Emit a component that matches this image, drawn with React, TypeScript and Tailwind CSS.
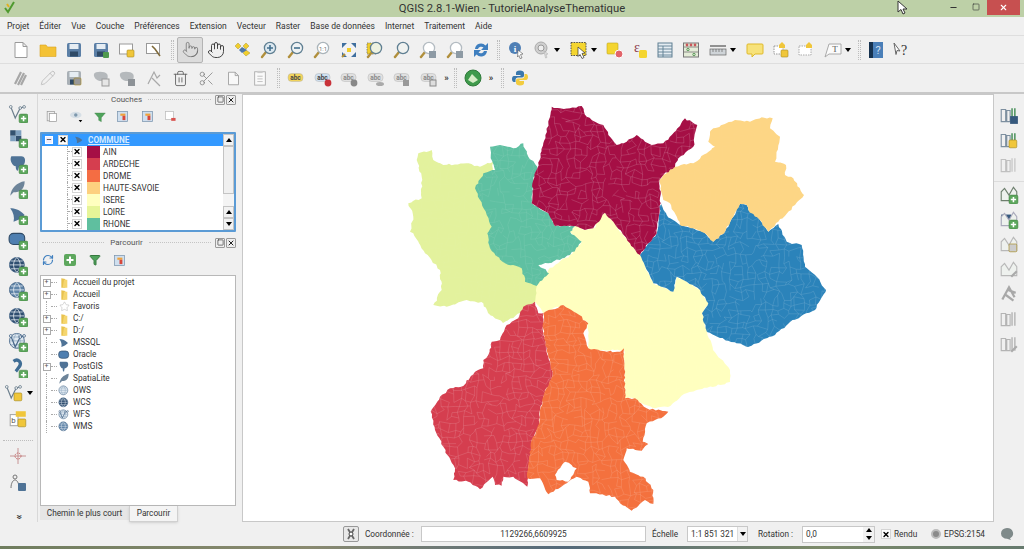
import type { ReactNode } from 'react';
import { Hand, Pointer, Trash2, Scissors, Pencil, RefreshCw, Filter, Star, Minus, Square, X } from 'lucide-react';

const font = "font-['Roboto','Noto_Sans',sans-serif]";

// ---- small icon drawings, all on an 18x18 box ----
const Mag = ({ fill = '#e6eef2', stroke = '#5f7f92', children }: { fill?: string; stroke?: string; children?: ReactNode }) => (
  <>
    <line x1="6" y1="11" x2="2" y2="16" stroke="#b08f3c" strokeWidth="2.4" strokeLinecap="round" />
    <circle cx="10" cy="7" r="5.6" fill={fill} stroke={stroke} strokeWidth="1.3" />
    {children}
  </>
);
const Plus = ({ x = 14, y = 14, c = '#5da75d' }: { x?: number; y?: number; c?: string }) => (
  <>
    <rect x={x - 4} y={y - 4} width="8" height="8" rx="1.5" fill={c} stroke="#3f7f3f" strokeWidth=".5" />
    <path d={`M${x - 2.4} ${y}h4.8M${x} ${y - 2.4}v4.8`} stroke="#fff" strokeWidth="1.4" />
  </>
);
const Floppy = ({ c = '#5b7fa6' }: { c?: string }) => (
  <>
    <rect x="2" y="2" width="14" height="14" rx="1.5" fill={c} />
    <rect x="4.5" y="3" width="9" height="5" fill="#e6edf3" />
    <rect x="5" y="10.5" width="8" height="5" fill="#2f4a66" />
  </>
);
const Page = ({ c = '#fff' }: { c?: string }) => <path d="M3 1.5h8l4 4v11H3z M11 1.5v4h4" fill={c} stroke="#9a9a9a" strokeWidth="1" />;
const Sticker = ({ c = '#f0c63a' }: { c?: string }) => <rect x="9" y="9" width="7" height="7" rx="1" fill={c} stroke="#a78c23" strokeWidth=".6" />;
const Folder = () => <path d="M1 4h6l1.500 2H17v9.500H1z" fill="#f4c235" stroke="#d8a320" strokeWidth=".6" />;
const Globe = ({ c = '#5f84a8', light = false }: { c?: string; light?: boolean }) => (
  <>
    <circle cx="8" cy="8" r="6.7" fill={light ? '#dfe8f0' : c} stroke="#48688a" strokeWidth=".8" />
    <path d="M1.500 8h13M8 1.300c-4 4-4 9.400 0 13.400M8 1.300c4 4 4 9.400 0 13.400M2.800 4.500h10.400M2.800 11.500h10.400" fill="none" stroke={light ? '#8fa8c0' : '#e8eef4'} strokeWidth=".7" />
  </>
);
const Vertices = ({ c = '#6a7d8c' }: { c?: string }) => (
  <>
    <path d="M2.500 3.500l4 10L11 4.500l3.500-1" fill="none" stroke={c} strokeWidth="1.100" />
    <circle cx="2.500" cy="3.500" r="1.200" fill="#fff" stroke={c} strokeWidth=".8" />
    <circle cx="11" cy="4.500" r="1.200" fill="#fff" stroke={c} strokeWidth=".8" />
    <circle cx="14.500" cy="3.500" r="1.200" fill="#fff" stroke={c} strokeWidth=".8" />
  </>
);
const Shape = () => <path d="M2 3c4 0 8 1 13 6-3 3-6 5-10 6 1-4 0-8-3-12z" fill="#4f7396" />;
const Label = ({ text = '#444', bg = '#f2d45c', extra }: { text?: string; bg?: string; extra?: ReactNode }) => (
  <>
    <rect x="1" y="4.500" width="15" height="8" rx="3.500" fill={bg} stroke="#aaa" strokeWidth=".4" />
    <text x="8.500" y="11" fontSize="6.500" textAnchor="middle" fill={text} fontFamily="Roboto" fontWeight="700">abc</text>
    {extra}
  </>
);
const Bars = ({ tone = '#7d8f9f', a = '#5a9a6a' }: { tone?: string; a?: string }) => (
  <>
    <path d="M2 15V4h4v11zM7 15V5h3v10z" fill="none" stroke={tone} strokeWidth="1" />
    <path d="M11 15V3h1.500v12zM13.500 15V3H15v12z" fill={a} />
  </>
);
const Lines = ({ c = '#7a8a7a' }: { c?: string }) => <path d="M2 14V7l3-3 4 6 4-7 3 4v8H2z" fill="#eef1ee" stroke={c} strokeWidth="1" />;

const glyphs: Record<string, ReactNode> = {
  newdoc: <Page />,
  open: <Folder />,
  treefolder: (<><path d="M5 2l6 1v13H5z" fill="#e8c24e" /><path d="M9 4h5v12H7z" fill="#f5d66f" /></>),
  save: <Floppy />,
  saveas: (<><Floppy /><rect x="11" y="11" width="6" height="6" rx="1" fill="#4f9a4f" /></>),
  composer: (<><rect x="1.500" y="3" width="13" height="10" fill="#fff" stroke="#999" /><Sticker /></>),
  manager: (<><rect x="1.500" y="2.500" width="13" height="10" fill="#fff" stroke="#999" /><path d="M7 5l3 3 5 7" stroke="#7f6a3a" strokeWidth="1.600" fill="none" /></>),
  pan: (<><path d="M4 2l3 3-3 3-3-3zM12 2l3 3-3 3-3-3zM12 9l4 3-4 3-3-3z" fill="#f2cf2c" stroke="#9a8420" strokeWidth=".4" /><path d="M8 6l5 3-5 3-3-3z" fill="#4f78a8" /></>),
  zoomin: (<Mag fill="#dce8f0"><path d="M7 7h6M10 4v6" stroke="#43708f" strokeWidth="1.600" /></Mag>),
  zoomout: (<Mag fill="#eef2f4"><path d="M7 7h6" stroke="#43708f" strokeWidth="1.600" /></Mag>),
  zoom11: (<Mag fill="#fff" stroke="#aab4ba"><text x="10" y="9.500" fontSize="6" textAnchor="middle" fill="#777" fontFamily="Roboto">1:1</text></Mag>),
  full: (<><rect x="3" y="3" width="12" height="12" fill="#f3f3f3" /><path d="M2 2h5L2 7zM16 2v5l-5-5zM2 16v-5l5 5zM16 16h-5l5-5z" fill="#3f6f9f" /><path d="M5 13l-3 3" stroke="#b08f3c" strokeWidth="2" /><path d="M7 7h4v4H7z" fill="#f2cf2c" /></>),
  zsel: (<><rect x="1" y="2" width="9" height="11" fill="#f2cf2c" stroke="#666" strokeDasharray="1.500 1" strokeWidth=".7" /><Mag fill="#eef2e0" /></>),
  zlayer: (<Mag fill="#f0f2f0" />),
  zlast: (<><Mag fill="#fff" stroke="#b4bcc2" /><rect x="10" y="10" width="7" height="7" fill="#8d9aa4" /></>),
  znext: (<><Mag fill="#fff" stroke="#b4bcc2" /><rect x="10" y="10" width="7" height="7" fill="#8d9aa4" /></>),
  refresh: <path d="M3 8a6 6 0 0 1 10.500-3.500L16 2v7h-7l2.500-2.500A3.500 3.500 0 0 0 6 8zM15 10a6 6 0 0 1-10.500 3.500L2 16V9h7l-2.500 2.500A3.500 3.500 0 0 0 12 10z" fill="#3f7fbf" />,
  info: (<><circle cx="8" cy="7" r="6" fill="#4f7fb5" /><text x="8" y="10.500" fontSize="9" textAnchor="middle" fill="#fff" fontWeight="700" fontFamily="Liberation Serif">i</text><path d="M11 9l5 4-2.500.5L15 17l-2 .5-1-3-1.500 1.500z" fill="#fff" stroke="#555" strokeWidth=".6" /></>),
  idgray: (<><circle cx="8" cy="7" r="6" fill="#cfcfcf" stroke="#aaa" /><circle cx="8" cy="7" r="3" fill="#eee" stroke="#999" /><path d="M11 10l4 3-2 .5 1 3-1.500.5z" fill="#ddd" stroke="#aaa" strokeWidth=".5" /></>),
  select: (<><rect x="1" y="1.500" width="15" height="13" fill="#f4d52f" stroke="#444" strokeDasharray="1.600 1" strokeWidth=".9" /><path d="M8 6l7 6-3 .5 2 4-2 1-2-4-2 2z" fill="#fff" stroke="#333" strokeWidth=".7" /></>),
  deselect: (<><rect x="1" y="2" width="11" height="11" rx="1" fill="#f4d52f" stroke="#c0a81f" strokeWidth=".6" /><circle cx="13" cy="13" r="4" fill="#e2646a" stroke="#fff" /></>),
  expr: (<><text x="6" y="11" fontSize="14" textAnchor="middle" fill="#8c3a4a" fontFamily="Liberation Serif">ε</text><rect x="8" y="9" width="8" height="8" rx="1.500" fill="#f4d52f" /></>),
  table: (<><rect x="2" y="2" width="14" height="14" fill="#e4ecf2" stroke="#5f7f92" /><path d="M2 5h14M2 8h14M2 11h14M2 14h14M7 5v11" stroke="#5f7f92" strokeWidth=".9" /></>),
  stats: (<><rect x="1.500" y="2" width="15" height="14" fill="#e4ecd8" stroke="#777" /><path d="M1.500 6h15M1.500 11h15" stroke="#777" strokeWidth=".8" /><circle cx="5" cy="4" r="1.400" fill="#c9565a" /><circle cx="9" cy="4" r="1.400" fill="#c9565a" /><circle cx="13" cy="4" r="1.400" fill="#c9565a" /><circle cx="6" cy="8.500" r="1.200" fill="none" stroke="#5a9a5a" /><circle cx="12" cy="13.500" r="1.200" fill="none" stroke="#5a9a5a" /></>),
  measure: (<><path d="M1 5h16" stroke="#333" strokeWidth="1" /><rect x="1" y="8" width="16" height="6" fill="#cfd4d8" stroke="#666" strokeWidth=".7" /><path d="M4 8v3M7 8v3M10 8v3M13 8v3" stroke="#666" strokeWidth=".7" /></>),
  tip: <path d="M2 3h14a1 1 0 0 1 1 1v8a1 1 0 0 1-1 1H9l-3 3v-3H2a1 1 0 0 1-1-1V4a1 1 0 0 1 1-1z" fill="#f7e27a" stroke="#dfb92a" />,
  movetip: (<><rect x="2" y="5" width="9" height="8" fill="#fff" stroke="#999" strokeDasharray="1.500 1" /><path d="M7 4l3-3 3 3v3H7z" fill="#f0c63a" /><Sticker /></>),
  movetip2: (<><rect x="2" y="5" width="12" height="9" fill="#fff" stroke="#aaa" strokeDasharray="1.500 1" /><path d="M9 4l3-3 3 3v3H9z" fill="#f0c63a" /></>),
  text: (<><path d="M5 3h12v10H5L1 16z" fill="#fbfbfb" stroke="#aaa" /><text x="11" y="11" fontSize="9" textAnchor="middle" fill="#555" fontFamily="Liberation Serif">T</text></>),
  help: (<><rect x="2" y="1" width="14" height="16" fill="#4a7fb8" /><rect x="2" y="1" width="4" height="16" fill="#16324f" /><text x="11" y="13" fontSize="11" textAnchor="middle" fill="#cfe0f2" fontFamily="Roboto">?</text></>),
  whatsthis: (<><path d="M2 2l6 8-3-.5-1 4z" fill="#fff" stroke="#666" /><text x="12" y="14" fontSize="14" textAnchor="middle" fill="#333" fontFamily="Liberation Serif">?</text></>),
  edits: <path d="M3 15L9 3M6 16L12 4M9 16l5-10" stroke="#a7a7a7" strokeWidth="2.200" />,
  savedit: (<><Floppy c="#a9b0b6" /><Sticker c="#999" /></>),
  cloud: (<><path d="M2 5c1-3 11-3 13 0 1.500 2 .5 6-1 7H8c-3 0-7-4-6-7z" fill="#b5b9bc" /><rect x="10" y="10" width="7" height="7" fill="#e6e6e6" stroke="#999" /></>),
  cloud2: (<><path d="M2 5c1-3 11-3 13 0 1.500 2 .5 6-1 7H8c-3 0-7-4-6-7z" fill="#b5b9bc" /><rect x="10" y="10" width="7" height="7" fill="#8d9297" /></>),
  vertexed: <path d="M3 15L9 3l3 6 3-3M7 9l8 8" stroke="#a9a9a9" strokeWidth="1.200" fill="none" />,
  copy: <Page c="#f8f8f8" />,
  paste: (<><rect x="3" y="2" width="12" height="15" fill="#fafafa" stroke="#aaa" /><path d="M6 7h6M6 10h6M6 13h6" stroke="#bbb" /><rect x="6" y="1" width="6" height="2.500" fill="#ccc" /></>),
  abc1: <Label />,
  abc2: <Label bg="#cfe0f0" extra={<circle cx="14" cy="14" r="3.400" fill="#c8323a" />} />,
  abc3: <Label bg="#e0e0e0" text="#888" extra={<circle cx="14" cy="14" r="3.400" fill="#888" />} />,
  abc4: <Label bg="#e0e0e0" text="#888" extra={<ellipse cx="13" cy="15" rx="4" ry="2" fill="#aaa" />} />,
  abc5: <Label bg="#e0e0e0" text="#888" extra={<rect x="10" y="11" width="6" height="6" fill="#999" />} />,
  abc6: <Label bg="#e0e0e0" text="#888" extra={<rect x="10" y="11" width="6" height="6" fill="#ddd" stroke="#888" />} />,
  sphere: (<><circle cx="9" cy="9" r="8" fill="#3f9a4c" stroke="#2f7a3a" /><path d="M4 11l4-6 6 6-5 3z" fill="#d6ecc6" /></>),
  python: (<><path d="M9 1.500c-3 0-4 1-4 2.500V6h4.500v1H3C1.500 7 1 8.500 1 10s.5 3 2 3h1.500v-2c0-1.500 1-2.500 2.500-2.500h4c1.200 0 2-.8 2-2V4c0-1.500-1.500-2.500-4-2.500z" fill="#3b78ac" /><path d="M9 16.500c3 0 4-1 4-2.500v-2H8.500v-1H15c1.500 0 2-1.500 2-3s-.5-3-2-3h-1.500v2c0 1.500-1 2.500-2.500 2.500H7c-1.200 0-2 .8-2 2V14c0 1.500 1.500 2.500 4 2.500z" fill="#f2cc3f" /></>),
  pagesmall: (<><rect x="3" y="2" width="10" height="13" fill="#f0f0f0" stroke="#999" /><rect x="6" y="5" width="10" height="11" fill="#fff" stroke="#999" /></>),
  eye: (<><ellipse cx="8" cy="7" rx="8" ry="4.500" fill="#d6dfe6" /><circle cx="8" cy="7" r="2.400" fill="#7d98ad" /><path d="M12 14h5l-2.500 3z" fill="#000" /></>),
  funnel: <path d="M1 3h16l-6 7v6l-4-2v-4z" fill="#4fa35c" stroke="#36783f" strokeWidth=".5" />,
  layers: (<><rect x="2" y="2" width="14" height="14" fill="#cfdfef" stroke="#7a94ad" /><path d="M6 5h7v3H6z" fill="#f0a33a" /><path d="M9 8h4v6H9z" fill="#d8473a" /></>),
  remove: (<><rect x="2" y="2" width="11" height="11" fill="#fff" stroke="#bbb" /><rect x="10" y="11" width="6" height="4" fill="#d9534f" /></>),
  addvec: (<><Vertices /><Plus /></>),
  addrast: (<><path d="M2 2h5v5H2zM7 7h5v5H7z" fill="#33516f" /><path d="M7 2h5v5H7zM2 7h5v5H2z" fill="#7fa0bf" /><Plus /></>),
  addpg: (<><path d="M3 2h9c3 0 4 3 3 6-1 3-4 3-5 3l-1 4c-2 0-2-3-2-4-3 0-6-6-4-9z" fill="#4f7396" /><Plus /></>),
  addspatial: (<><path d="M2 15C3 8 8 3 15 2c0 7-4 10-10 10z" fill="#6d8499" /><Plus /></>),
  addmssql: (<><Shape /><Plus /></>),
  addoracle: (<><rect x="1" y="3" width="14" height="10" rx="4" fill="#4f7fb0" stroke="#2f4a66" /><Plus /></>),
  addwms: (<><Globe /><Plus /></>),
  addwcs: (<><Globe c="#2f4e70" /><Plus /></>),
  addwfs: (<><Globe light /><Vertices c="#48688a" /><Plus /></>),
  addcomma: (<><path d="M5 3c4-3 8 1 5 5-1 1.500-2 3-3 4" fill="none" stroke="#3f6d95" strokeWidth="3" /><Plus x={14} y={15} /></>),
  newvec: (<><Vertices /><Sticker /></>),
  addfield: (<><rect x="2" y="5" width="7" height="10" fill="#fff" stroke="#aaa" /><path d="M7 2h9v5H7z" fill="#f0c63a" /><text x="5" y="13" fontSize="7" textAnchor="middle" fontFamily="Roboto" fill="#555">b</text><Sticker /></>),
  crosshair: (<><path d="M9 1v16M1 9h16" stroke="#c28a8a" strokeWidth=".9" /><circle cx="9" cy="9" r="3" fill="none" stroke="#c26a6a" strokeDasharray="1.500 1" /></>),
  personplugin: (<><circle cx="6" cy="3" r="2" fill="none" stroke="#777" /><path d="M2 14c0-5 2-8 4-8s4 3 4 8" fill="none" stroke="#777" /><rect x="9" y="9" width="8" height="8" rx="1" fill="#4f7396" /></>),
  r1: (<><Bars /><rect x="10" y="10" width="7" height="7" fill="#36597d" /></>),
  r2: (<><Bars /><Sticker /></>),
  r3: <Bars tone="#c0c0c0" a="#d0d0d0" />,
  r4: (<><Lines c="#6e7f6e" /><Plus x={13} y={14} /></>),
  r5: (<><rect x="2" y="5" width="9" height="9" fill="#36597d" /><Lines c="#aab" /><Plus x={13} y={14} /></>),
  r6: (<><Lines c="#b8b8b8" /><Sticker c="#ccc" /></>),
  r7: (<><Lines c="#b8b8b8" /><path d="M11 16l5-5" stroke="#aaa" strokeWidth="2" /></>),
  r8: <path d="M3 14L9 3l5 9M7 5l8 3M5 9l8 6" stroke="#a8a8a8" strokeWidth="2" fill="none" />,
  r9: <Bars tone="#b4b4b4" a="#bdbdbd" />,
  r10: (<><Bars tone="#b4b4b4" a="#bdbdbd" /><path d="M11 16l5-5" stroke="#aaa" strokeWidth="2" /></>),
  mssql: <Shape />,
  oracle: <rect x="1" y="3" width="15" height="11" rx="4.500" fill="#4f7fb0" stroke="#2f4a66" />,
  pg: <path d="M3 1h9c3 0 4 3 3 6-1 3-4 4-5 4l-1 5c-2 0-2-3-2-5-3 0-6-7-4-10z" fill="#4f7396" />,
  spatialite: <path d="M2 16C3 8 8 3 16 1c0 8-4 11-10 11z" fill="#6d8499" />,
  ows: <Globe light />,
  wcs: <Globe c="#2f4e70" />,
  wfs: (<><Globe light /><Vertices c="#48688a" /></>),
  wms: <Globe />,
};

function Ico({ name, size = 18 }: { name: string; size?: number }) {
  return (
    <svg width={size} height={size} viewBox="0 0 18 18" className="shrink-0">
      {glyphs[name]}
    </svg>
  );
}

// ---- toolbar parts ----
function Drop() {
  return <span className="ml-[3px] h-0 w-0 border-x-[3.5px] border-t-[4px] border-x-transparent border-t-black" />;
}

function Tool({ children, w = 'w-[26.5px]', dropdown = false }: { children: ReactNode; w?: string; dropdown?: boolean }) {
  return (
    <div className={`flex h-full shrink-0 items-center justify-center ${w}`}>
      {children}
      {dropdown && <Drop />}
    </div>
  );
}

function Grip({ w = 'w-[10px]' }: { w?: string }) {
  return (
    <div className={`flex h-full shrink-0 items-center justify-center ${w}`}>
      <div className="h-[20px] w-[3px] border-x border-dotted border-[#bdbdbd]" />
    </div>
  );
}

function Row1() {
  const first = ['newdoc', 'open', 'save', 'saveas', 'composer', 'manager'];
  const nav = ['pan', 'zoomin', 'zoomout', 'zoom11', 'full', 'zsel', 'zlayer', 'zlast', 'znext', 'refresh'];
  return (
    <div className="flex h-[27px] items-center pl-[8px]">
      {first.map((n) => (
        <Tool key={n}><Ico name={n} /></Tool>
      ))}
      <Grip />
      <div className="flex h-[26px] w-[26px] shrink-0 items-center justify-center rounded-[2px] border border-[#b4b4b4] bg-[#dcdcdc]">
        <Pointer size={17} strokeWidth={1} color="#666" />
      </div>
      <Tool><Hand size={18} strokeWidth={1.2} color="#333" /></Tool>
      {nav.map((n) => (
        <Tool key={n}><Ico name={n} /></Tool>
      ))}
      <Grip w="w-[8px]" />
      <Tool w="w-[26px]"><Ico name="info" /></Tool>
      <Tool w="w-[36px]" dropdown><Ico name="idgray" /></Tool>
      <Tool w="w-[38px]" dropdown><Ico name="select" /></Tool>
      <Tool w="w-[24px]"><Ico name="deselect" /></Tool>
      <Tool w="w-[26px]"><Ico name="expr" /></Tool>
      <Tool w="w-[25px]"><Ico name="table" /></Tool>
      <Tool w="w-[26px]"><Ico name="stats" /></Tool>
      <Tool w="w-[38px]" dropdown><Ico name="measure" /></Tool>
      <Tool w="w-[26px]"><Ico name="tip" /></Tool>
      <Tool w="w-[26px]"><Ico name="movetip" /></Tool>
      <Tool w="w-[25px]"><Ico name="movetip2" /></Tool>
      <Tool w="w-[38px]" dropdown><Ico name="text" /></Tool>
      <Grip w="w-[6px]" />
      <Tool w="w-[26px]"><Ico name="help" /></Tool>
      <Tool w="w-[25px]"><Ico name="whatsthis" /></Tool>
    </div>
  );
}

function Row2() {
  const abc = ['abc1', 'abc2', 'abc3', 'abc4', 'abc5', 'abc6'];
  return (
    <div className="flex h-[28px] items-center pl-[8px]">
      <Tool><Ico name="edits" /></Tool>
      <Tool><Pencil size={16} strokeWidth={1} color="#aaa" /></Tool>
      <Tool><Ico name="savedit" /></Tool>
      <Tool><Ico name="cloud" /></Tool>
      <Tool><Ico name="cloud2" /></Tool>
      <Tool><Ico name="vertexed" /></Tool>
      <Tool><Trash2 size={17} strokeWidth={1.3} color="#666" /></Tool>
      <Tool><Scissors size={17} strokeWidth={1} color="#777" /></Tool>
      <Tool><Ico name="copy" size={15} /></Tool>
      <Tool><Ico name="paste" size={16} /></Tool>
      <Grip />
      {abc.map((n) => (
        <Tool key={n}><Ico name={n} /></Tool>
      ))}
      <Tool w="w-[9px]"><span className="text-[9px] font-bold leading-none text-[#333]">»</span></Tool>
      <Grip w="w-[9px]" />
      <Tool w="w-[26px]"><Ico name="sphere" /></Tool>
      <Tool w="w-[10px]"><span className="text-[9px] font-bold leading-none text-[#333]">»</span></Tool>
      <Grip w="w-[12px]" />
      <Tool w="w-[24px]"><Ico name="python" /></Tool>
    </div>
  );
}

// ---- dock panels ----
function DockTitle({ title }: { title: string }) {
  return (
    <div className="flex h-[12px] items-center pl-[4px] pr-[6px]">
      <div className="h-0 flex-1 border-t border-dotted border-[#c4c4c4]" />
      <span className="px-[6px] text-[8px] font-normal leading-none text-[#555]">{title}</span>
      <div className="h-0 flex-1 border-t border-dotted border-[#c4c4c4]" />
      <div className="ml-[4px] flex gap-[1px]">
        <span className="flex h-[10px] w-[10px] items-center justify-center rounded-[1px] border border-[#9a9a9a] bg-[#eee]">
          <Square size={7} strokeWidth={2} color="#222" />
        </span>
        <span className="flex h-[10px] w-[10px] items-center justify-center rounded-[1px] border border-[#9a9a9a] bg-[#eee]">
          <X size={8} strokeWidth={3} color="#222" />
        </span>
      </div>
    </div>
  );
}

function XBox() {
  return (
    <span className="flex h-[10px] w-[10px] shrink-0 items-center justify-center border border-[#d4d4d4] bg-white">
      <X size={9} strokeWidth={4} color="#000" />
    </span>
  );
}

function ScrollBtn({ up }: { up: boolean }) {
  return (
    <div className="flex h-[12px] w-[11px] items-center justify-center border border-[#c4c4c4] bg-[#f2f2f2]">
      <span className={`h-0 w-0 border-x-[3px] border-x-transparent ${up ? 'border-b-[4px] border-b-black' : 'border-t-[4px] border-t-black'}`} />
    </div>
  );
}

const legend = [
  { label: 'AIN', color: '#a50f45' },
  { label: 'ARDECHE', color: '#d53e4f' },
  { label: 'DROME', color: '#f46d43' },
  { label: 'HAUTE-SAVOIE', color: '#fdd07f' },
  { label: 'ISERE', color: '#ffffbf' },
  { label: 'LOIRE', color: '#e6f598' },
  { label: 'RHONE', color: '#5fbf9f' },
  { label: '', color: '#2b83ba' },
];

function LayersTree() {
  return (
    <div className="ml-[2px] mr-[6px] flex h-[100px] overflow-hidden rounded-[1px] border-2 border-[#5b9bd5] bg-white text-[8.25px] leading-none text-[#333]">
      <div className="min-w-0 flex-1">
        <div className="flex h-[12px] items-center bg-[#3399ff] pl-[3px]">
          <span className="flex h-[8px] w-[8px] items-center justify-center border border-white bg-[#eef]"><Minus size={7} strokeWidth={3} color="#333" /></span>
          <span className="ml-[5px]"><XBox /></span>
          <span className="ml-[6px]"><Ico name="mssql" size={10} /></span>
          <span className="ml-[4px] font-bold text-[#d6ebff] underline">COMMUNE</span>
        </div>
        {legend.map((l) => (
          <div key={l.color} className="relative flex h-[12px] items-center pl-[25px]">
            <span className="h-[12px] w-0 border-l border-dotted border-[#aaa]" />
            <span className="w-[4px] border-t border-dotted border-[#aaa]" />
            <XBox />
            <span className="ml-[5px] h-[12px] w-[13px] shrink-0" style={{ backgroundColor: l.color }} />
            <span className="ml-[3px]">{l.label}</span>
          </div>
        ))}
      </div>
      <div className="flex w-[11px] flex-col bg-[#f4f4f4]">
        <ScrollBtn up />
        <div className="h-[48px] border border-[#c4c4c4] bg-[#f0f0f0]" />
        <div className="flex-1" />
        <ScrollBtn up />
        <ScrollBtn up={false} />
      </div>
    </div>
  );
}

const browser = [
  { label: 'Accueil du projet', icon: 'treefolder', plus: true },
  { label: 'Accueil', icon: 'treefolder', plus: true },
  { label: 'Favoris', icon: 'star', plus: false },
  { label: 'C:/', icon: 'treefolder', plus: true },
  { label: 'D:/', icon: 'treefolder', plus: true },
  { label: 'MSSQL', icon: 'mssql', plus: false },
  { label: 'Oracle', icon: 'oracle', plus: false },
  { label: 'PostGIS', icon: 'pg', plus: true },
  { label: 'SpatiaLite', icon: 'spatialite', plus: false },
  { label: 'OWS', icon: 'ows', plus: false },
  { label: 'WCS', icon: 'wcs', plus: false },
  { label: 'WFS', icon: 'wfs', plus: false },
  { label: 'WMS', icon: 'wms', plus: false },
];

function BrowserTree() {
  return (
    <div className="ml-[2px] mr-[6px] h-[232px] border border-[#b8b8b8] bg-white pt-[1px] text-[8.25px] leading-none text-[#333]">
      {browser.map((b) => (
        <div key={b.label} className="flex h-[12px] items-center pl-[1px]">
          <span className="flex w-[9px] shrink-0 justify-center">
            {b.plus ? (
              <span className="flex h-[8px] w-[8px] items-center justify-center border border-[#aaa] text-[7px] leading-none text-[#555]">+</span>
            ) : (
              <span className="h-[12px] w-0 border-l border-dotted border-[#aaa]" />
            )}
          </span>
          <span className="w-[6px] shrink-0 border-t border-dotted border-[#aaa]" />
          <span className="flex w-[14px] shrink-0 justify-center">
            {b.icon === 'star' ? <Star size={11} strokeWidth={1} color="#aaa" /> : <Ico name={b.icon} size={12} />}
          </span>
          <span className="ml-[2px]">{b.label}</span>
        </div>
      ))}
    </div>
  );
}

function Panels() {
  return (
    <div className="flex w-[204px] shrink-0 flex-col">
      <DockTitle title="Couches" />
      <div className="flex h-[26px] items-center pb-[4px] pl-[3px]">
        <Tool w="w-[21px]"><Ico name="pagesmall" size={13} /></Tool>
        <Tool w="w-[28px]"><Ico name="eye" size={13} /></Tool>
        <Tool w="w-[20px]"><Ico name="funnel" size={12} /></Tool>
        <Tool w="w-[25px]"><Ico name="layers" size={13} /></Tool>
        <Tool w="w-[24px]"><Ico name="layers" size={13} /></Tool>
        <Tool w="w-[22px]"><Ico name="remove" size={13} /></Tool>
      </div>
      <LayersTree />
      <div className="h-[5px]" />
      <DockTitle title="Parcourir" />
      <div className="flex h-[26px] items-center pb-[3px] pl-[1px]">
        <Tool w="w-[18px]"><RefreshCw size={12} strokeWidth={2.4} color="#3f7fbf" /></Tool>
        <Tool w="w-[25px]"><svg width="12" height="12" viewBox="0 0 12 12"><rect width="12" height="12" rx="2" fill="#5da75d" /><path d="M2.500 6h7M6 2.500v7" stroke="#fff" strokeWidth="2" /></svg></Tool>
        <Tool w="w-[25px]"><Filter size={12} fill="#4fa35c" color="#36783f" /></Tool>
        <Tool w="w-[24px]"><Ico name="layers" size={13} /></Tool>
      </div>
      <BrowserTree />
      <div className="ml-[2px] flex h-[16px] items-start text-[8.25px] leading-none text-[#333]">
        <div className="flex h-[14px] w-[89px] items-center justify-center bg-[#e6e6e6]">Chemin le plus court</div>
        <div className="flex h-[16px] w-[49px] items-center justify-center border border-t-0 border-[#d0d0d0] bg-[#f4f4f4] shadow-sm">Parcourir</div>
      </div>
    </div>
  );
}

function LeftBar() {
  const names = ['addvec', 'addrast', 'addpg', 'addspatial', 'addmssql', 'addoracle', 'addwcs', 'addwms', 'addwcs', 'addwfs', 'addcomma'];
  return (
    <div className="flex w-[38px] shrink-0 flex-col items-center border-r border-[#d8d8d8] pr-[1px] pt-[6px]">
      {names.map((n, i) => (
        <div key={n + i} className="flex h-[25.5px] items-center justify-center"><Ico name={n} size={20} /></div>
      ))}
      <div className="flex h-[25.5px] items-center"><Ico name="newvec" size={20} /><Drop /></div>
      <div className="flex h-[25.5px] items-center justify-center"><Ico name="addfield" size={20} /></div>
      <div className="mt-[8px] w-[30px] border-t border-dotted border-[#bdbdbd]" />
      <div className="mt-[2px] flex h-[26px] items-center"><Ico name="crosshair" size={18} /></div>
      <div className="flex h-[28px] items-center"><Ico name="personplugin" size={18} /></div>
      <div className="mt-[15px] rotate-90 text-[10px] font-bold leading-none text-[#333]">»</div>
    </div>
  );
}

function RightBar() {
  const names = ['r1', 'r2', 'r3', 'r4', 'r5', 'r6', 'r7', 'r8', 'r9', 'r10'];
  return (
    <div className="flex w-[30px] shrink-0 flex-col items-center pt-[8px]">
      {names.map((n, i) => (
        <div key={n} className={`flex h-[25px] items-center justify-center ${i === 3 ? 'mt-[4px] w-full border-t border-[#dcdcdc]' : ''}`}>
          <Ico name={n} size={20} />
        </div>
      ))}
    </div>
  );
}

// ---- the map ----
type Pt = [number, number];

function rng(seed: number) {
  let s = seed;
  return () => {
    s = (s * 16807) % 2147483647;
    return s / 2147483647;
  };
}

// rough the region edges so they read as commune boundaries
function rough(pts: Pt[], ox: number, oy: number, seed: number) {
  const r = rng(seed);
  const out: string[] = [];
  pts.forEach((p, i) => {
    const q = pts[(i + 1) % pts.length];
    const ax = ox + p[0] / 3;
    const ay = oy + p[1] / 3;
    const bx = ox + q[0] / 3;
    const by = oy + q[1] / 3;
    const n = Math.max(1, Math.round(Math.hypot(bx - ax, by - ay) / 3));
    for (let k = 0; k < n; k++) {
      const t = k / n;
      const j = k === 0 ? 0 : 0.9;
      out.push(`${(ax + (bx - ax) * t + (r() - 0.5) * 2 * j).toFixed(1)},${(ay + (by - ay) * t + (r() - 0.5) * 2 * j).toFixed(1)}`);
    }
  });
  return out.join(' ');
}

const A: [number, number] = [400, 100];
const B: [number, number] = [420, 300];

const regions: { id: string; color: string; line: number; at: [number, number]; pts: Pt[] }[] = [
  { id: 'loire', color: '#e3f29d', line: 0.06, at: A, pts: [[55,160],[95,150],[100,180],[130,195],[200,190],[240,200],[280,185],[270,260],[420,560],[410,600],[360,639],[309,669],[264,639],[250,610],[200,600],[140,620],[100,615],[125,570],[120,510],[75,460],[40,400],[30,395],[40,350],[25,310],[65,295],[65,230],[50,180]] },
  { id: 'isere', color: '#ffffbf', line: 0.05, at: A, pts: [[615,338],[640,365],[690,430],[720,465],[760,550],[820,575],[830,530],[860,545],[900,570],[925,610],[906,640],[921,696],[939,750],[990,810],[990,846],[861,879],[804,921],[759,924],[699,894],[675,894],[672,750],[564,750],[564,669],[489,615],[429,639],[405,606],[411,555],[445,510],[510,465],[545,425],[510,395],[525,378],[555,390],[580,385]] },
  { id: 'rhone', color: '#5fc0a2', line: 0.14, at: A, pts: [[270,140],[300,135],[340,145],[370,130],[385,170],[412,200],[400,240],[395,310],[445,340],[465,378],[525,378],[510,395],[545,425],[510,465],[445,490],[415,495],[447,520],[410,558],[375,545],[365,505],[315,490],[270,445],[262,400],[275,380],[260,345],[240,300],[225,265],[250,220],[285,210],[272,175]] },
  { id: 'blue', color: '#2b83ba', line: 0.24, at: A, pts: [[782,305],[800,345],[840,375],[880,385],[915,400],[940,425],[975,395],[1000,350],[1020,312],[1040,315],[1045,330],[1080,360],[1105,395],[1135,372],[1160,425],[1205,435],[1215,500],[1250,530],[1278,570],[1245,630],[1170,666],[1125,705],[1044,741],[960,714],[921,696],[906,640],[925,610],[900,570],[860,545],[830,530],[820,575],[760,550],[720,465],[745,430],[770,400]] },
  { id: 'savoie', color: '#fdd685', line: 0.04, at: A, pts: [[940,85],[1005,60],[1050,65],[1085,52],[1118,55],[1110,85],[1140,110],[1125,185],[1158,195],[1155,225],[1180,235],[1212,285],[1185,315],[1135,365],[1105,395],[1080,360],[1045,330],[1040,315],[1020,312],[1000,350],[975,395],[940,425],[915,400],[880,385],[840,375],[810,310],[790,300],[778,240],[790,225],[825,200],[880,190],[920,160],[945,140],[925,125],[930,95]] },
  { id: 'ain', color: '#a50f45', line: 0.3, at: A, pts: [[455,20],[480,25],[510,25],[545,18],[560,50],[585,65],[610,75],[625,105],[650,135],[680,125],[710,105],[735,125],[755,135],[790,130],[815,105],[855,55],[892,75],[880,140],[835,175],[825,200],[790,225],[778,240],[782,310],[770,400],[745,430],[720,465],[690,430],[640,365],[615,338],[580,385],[555,390],[525,378],[465,378],[445,340],[395,310],[400,240],[412,205],[430,130],[445,70]] },
  { id: 'ardeche', color: '#d53e4f', line: 0.26, at: B, pts: [[345,5],[355,40],[370,40],[370,100],[385,170],[398,225],[370,290],[360,330],[358,370],[335,420],[325,530],[322,560],[280,530],[250,530],[245,557],[225,555],[218,530],[180,568],[145,545],[100,540],[105,505],[70,440],[45,390],[32,335],[60,290],[90,265],[130,258],[165,215],[190,205],[190,180],[205,165],[215,125],[240,120],[260,75],[295,55],[310,20]] },
  { id: 'drome', color: '#f4713e', line: 0.24, at: B, pts: [[370,40],[430,15],[470,40],[505,70],[490,100],[505,145],[560,155],[600,155],[612,145],[615,295],[645,295],[680,325],[745,335],[730,350],[680,370],[668,425],[685,432],[665,452],[620,445],[610,480],[630,515],[670,530],[700,570],[700,612],[675,600],[635,632],[600,610],[585,590],[510,580],[505,545],[470,530],[440,550],[385,583],[360,535],[322,535],[325,500],[335,420],[358,370],[360,330],[370,290],[398,225],[385,170],[370,100]] },
];

const hole: Pt[] = [[405,525],[435,485],[470,505],[445,545],[410,540]];

// jittered grid standing in for the commune boundaries
function communeNetwork() {
  const r = rng(4711);
  const step = 6;
  const cols = 74;
  const rows = 72;
  const p: Pt[][] = [];
  for (let y = 0; y < rows; y++) {
    p[y] = [];
    for (let x = 0; x < cols; x++) {
      p[y][x] = [400 + x * step + (r() - 0.5) * 5.5, 100 + y * step + (r() - 0.5) * 5.5];
    }
  }
  let d = '';
  for (let y = 0; y < rows; y++) {
    for (let x = 0; x < cols; x++) {
      const a = p[y][x];
      if (x + 1 < cols && r() > 0.3) d += `M${a[0].toFixed(1)} ${a[1].toFixed(1)}L${p[y][x + 1][0].toFixed(1)} ${p[y][x + 1][1].toFixed(1)}`;
      if (y + 1 < rows && r() > 0.3) d += `M${a[0].toFixed(1)} ${a[1].toFixed(1)}L${p[y + 1][x][0].toFixed(1)} ${p[y + 1][x][1].toFixed(1)}`;
    }
  }
  return d;
}

const shapes = regions.map((reg, i) => ({ ...reg, points: rough(reg.pts, reg.at[0], reg.at[1], 97 + i * 131) }));
const network = communeNetwork();

function MapCanvas() {
  return (
    <div className="min-w-0 flex-1 border border-[#c8c8c8] bg-white">
      <svg viewBox="243 95 750 426" className="block h-full w-full">
        <defs>
          <path id="communes" d={network} fill="none" stroke="#fff" strokeWidth=".5" />
          {shapes.map((s) => (
            <clipPath id={`clip-${s.id}`} key={s.id}>
              <polygon points={s.points} />
            </clipPath>
          ))}
        </defs>
        {shapes.map((s) => (
          <g key={s.id}>
            <polygon points={s.points} fill={s.color} />
            <g clipPath={`url(#clip-${s.id})`} opacity={s.line}>
              <use href="#communes" />
            </g>
          </g>
        ))}
        <polygon points={rough(hole, B[0], B[1], 55)} fill="#fff" />
      </svg>
    </div>
  );
}

function StatusBar() {
  return (
    <div className="flex h-[24px] shrink-0 items-center text-[8.25px] leading-none text-[#333]">
      <div className="ml-[343px] flex h-[16px] w-[16px] items-center justify-center rounded-[2px] border border-[#999] bg-[#e8e8e8]">
        <svg width="12" height="12" viewBox="0 0 12 12"><path d="M3 1l6 10M9 1L3 11" stroke="#666" strokeWidth="1.800" /><circle cx="6" cy="6" r="2" fill="#fff" stroke="#444" /></svg>
      </div>
      <span className="ml-[6px] w-[56px]">Coordonnée :</span>
      <div className="flex h-[16px] w-[225px] items-center justify-center border border-[#c8c8c8] bg-white">1129266,6609925</div>
      <span className="ml-[6px] w-[35px]">Échelle</span>
      <div className="flex h-[16px] w-[61px] items-center border border-[#c8c8c8] bg-white pl-[3px]">
        <span className="flex-1">1:1 851 321</span>
        <span className="flex h-full w-[10px] items-center justify-center border-l border-[#ddd] bg-[#f2f2f2]">
          <span className="h-0 w-0 border-x-[3px] border-t-[4px] border-x-transparent border-t-black" />
        </span>
      </div>
      <span className="ml-[10px] w-[44px]">Rotation :</span>
      <div className="flex h-[17px] w-[73px] items-center border border-[#c8c8c8] bg-white pl-[3px]">
        <span className="flex-1">0,0</span>
        <span className="flex h-full w-[11px] flex-col items-center justify-around bg-[#f2f2f2]">
          <span className="h-0 w-0 border-x-[3px] border-b-[4px] border-x-transparent border-b-black" />
          <span className="h-0 w-0 border-x-[3px] border-t-[4px] border-x-transparent border-t-black" />
        </span>
      </div>
      <span className="ml-[6px]"><XBox /></span>
      <span className="ml-[3px] w-[37px]">Rendu</span>
      <span className="h-[10px] w-[10px] rounded-full border-2 border-[#bbb] bg-[#8a8a8a]" />
      <span className="ml-[3px] w-[56px]">EPSG:2154</span>
      <svg width="14" height="14" viewBox="0 0 14 14"><path d="M7 1a6 5.500 0 0 1 3 10.300L11 13l-4-1.200A6 5.400 0 0 1 7 1z" fill="#7f8a8a" /></svg>
    </div>
  );
}

export default function App() {
  return (
    <div className={`relative flex h-[549px] w-[1024px] flex-col overflow-hidden bg-[#f0f0f0] ${font}`}>
      <div className="relative flex h-[17px] shrink-0 items-center justify-center bg-[#bdd0a7] text-[11.25px] leading-none text-[#333]">
        <span>QGIS 2.8.1-Wien - TutorielAnalyseThematique</span>
        <svg width="13" height="13" viewBox="0 0 13 13" className="absolute left-[3px] top-[1px]"><path d="M2 7l3 4 6-10" fill="none" stroke="#4f9a2f" strokeWidth="2" /><path d="M4 3l2 3" stroke="#e0b020" strokeWidth="2" /></svg>
        <svg width="11" height="15" viewBox="0 0 11 15" className="absolute left-[897px] top-[0px]"><path d="M1 1v11l3-2.500 2 4.500 2-1-2-4h4z" fill="#fff" stroke="#333" /></svg>
        <div className="absolute right-[4px] top-0 flex h-[14px] items-center text-[#333]">
          <Minus size={9} strokeWidth={3} />
          <span className="ml-[14px]"><Square size={8} strokeWidth={1.8} /></span>
          <span className="ml-[7px] flex h-[15px] w-[33px] items-center justify-center bg-[#c75050]"><X size={9} strokeWidth={3} color="#fff" /></span>
        </div>
      </div>
      <div className="flex h-[18px] shrink-0 items-center gap-[10px] pl-[7px] text-[8.5px] leading-none text-[#333]">
        {['Projet', 'Éditer', 'Vue', 'Couche', 'Préférences', 'Extension', 'Vecteur', 'Raster', 'Base de données', 'Internet', 'Traitement', 'Aide'].map((m) => (
          <span key={m}>{m}</span>
        ))}
      </div>
      <div className="shrink-0 border-t border-[#dedede]">
        <Row1 />
        <div className="border-t border-[#dedede]">
          <Row2 />
        </div>
      </div>
      <div className="flex min-h-0 flex-1 border-t-2 border-[#c8c8c8]">
        <LeftBar />
        <Panels />
        <MapCanvas />
        <RightBar />
      </div>
      <StatusBar />
      <div className="h-[3px] shrink-0 bg-[linear-gradient(90deg,#6f7d5e,#8a8a70_30%,#54697a_55%,#7c8a6a_80%,#667a6e)]" />
    </div>
  );
}
